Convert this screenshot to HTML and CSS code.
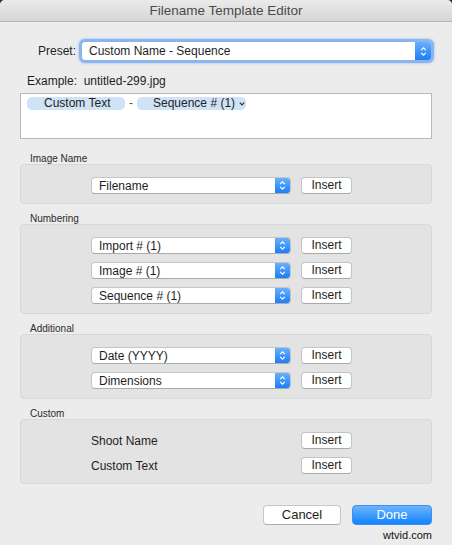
FILE: index.html
```html
<!DOCTYPE html>
<html lang="en">
<head>
<meta charset="utf-8">
<title>Filename Template Editor</title>
<link rel="stylesheet" href="styles.css">
</head>
<body>
<div class="window">
  <div class="titlebar">Filename Template Editor</div>
  <div class="content">
    <div class="preset-row">
      <span class="preset-label">Preset:</span>
      <div class="select select-wide">
        <span class="select-text">Custom Name - Sequence</span>
        <span class="stepper"><svg width="7" height="11" viewBox="0 0 7 11"><path d="M1.2 4.2 L3.5 1.8 L5.8 4.2 M1.2 6.8 L3.5 9.2 L5.8 6.8" fill="none" stroke="#fff" stroke-width="1.2"/></svg></span>
      </div>
    </div>
    <div class="example">Example:&nbsp; untitled-299.jpg</div>
    <div class="token-box">
      <span class="token token-a">Custom Text</span><span class="dash">-</span><span class="token token-b">Sequence # (1)<svg class="caret" width="6" height="4" viewBox="0 0 6 4"><path d="M0.8 0.6 L3 2.9 L5.2 0.6" fill="none" stroke="#333" stroke-width="1.2"/></svg></span>
    </div>

    <section class="group group-first">
      <div class="group-label">Image Name</div>
      <div class="group-box">
        <div class="row">
          <div class="select"><span class="select-text">Filename</span><span class="stepper"><svg width="7" height="11" viewBox="0 0 7 11"><path d="M1.2 4.2 L3.5 1.8 L5.8 4.2 M1.2 6.8 L3.5 9.2 L5.8 6.8" fill="none" stroke="#fff" stroke-width="1.2"/></svg></span></div>
          <button class="btn-insert">Insert</button>
        </div>
      </div>
    </section>

    <section class="group">
      <div class="group-label">Numbering</div>
      <div class="group-box">
        <div class="row">
          <div class="select"><span class="select-text">Import # (1)</span><span class="stepper"><svg width="7" height="11" viewBox="0 0 7 11"><path d="M1.2 4.2 L3.5 1.8 L5.8 4.2 M1.2 6.8 L3.5 9.2 L5.8 6.8" fill="none" stroke="#fff" stroke-width="1.2"/></svg></span></div>
          <button class="btn-insert">Insert</button>
        </div>
        <div class="row">
          <div class="select"><span class="select-text">Image # (1)</span><span class="stepper"><svg width="7" height="11" viewBox="0 0 7 11"><path d="M1.2 4.2 L3.5 1.8 L5.8 4.2 M1.2 6.8 L3.5 9.2 L5.8 6.8" fill="none" stroke="#fff" stroke-width="1.2"/></svg></span></div>
          <button class="btn-insert">Insert</button>
        </div>
        <div class="row">
          <div class="select"><span class="select-text">Sequence # (1)</span><span class="stepper"><svg width="7" height="11" viewBox="0 0 7 11"><path d="M1.2 4.2 L3.5 1.8 L5.8 4.2 M1.2 6.8 L3.5 9.2 L5.8 6.8" fill="none" stroke="#fff" stroke-width="1.2"/></svg></span></div>
          <button class="btn-insert">Insert</button>
        </div>
      </div>
    </section>

    <section class="group">
      <div class="group-label">Additional</div>
      <div class="group-box">
        <div class="row">
          <div class="select"><span class="select-text">Date (YYYY)</span><span class="stepper"><svg width="7" height="11" viewBox="0 0 7 11"><path d="M1.2 4.2 L3.5 1.8 L5.8 4.2 M1.2 6.8 L3.5 9.2 L5.8 6.8" fill="none" stroke="#fff" stroke-width="1.2"/></svg></span></div>
          <button class="btn-insert">Insert</button>
        </div>
        <div class="row">
          <div class="select"><span class="select-text">Dimensions</span><span class="stepper"><svg width="7" height="11" viewBox="0 0 7 11"><path d="M1.2 4.2 L3.5 1.8 L5.8 4.2 M1.2 6.8 L3.5 9.2 L5.8 6.8" fill="none" stroke="#fff" stroke-width="1.2"/></svg></span></div>
          <button class="btn-insert">Insert</button>
        </div>
      </div>
    </section>

    <section class="group">
      <div class="group-label">Custom</div>
      <div class="group-box">
        <div class="row">
          <span class="row-text">Shoot Name</span>
          <button class="btn-insert">Insert</button>
        </div>
        <div class="row">
          <span class="row-text">Custom Text</span>
          <button class="btn-insert">Insert</button>
        </div>
      </div>
    </section>

    <div class="footer">
      <button class="btn btn-cancel">Cancel</button>
      <button class="btn btn-done">Done</button>
    </div>
  </div>
  <div class="watermark">wtvid.com</div>
</div>
</body>
</html>
```

FILE: styles.css
```css
* {
  box-sizing: border-box;
  margin: 0;
  padding: 0;
}

html, body {
  width: 452px;
  height: 545px;
  overflow: hidden;
  background: #2e2e2e;
}

body {
  font-family: "Liberation Sans", Arial, sans-serif;
  font-size: 12px;
  color: #1e1e1e;
}

.window {
  position: relative;
  width: 452px;
  height: 545px;
  background: #ececec;
  border-radius: 5px 5px 0 0;
  overflow: hidden;
}

.titlebar {
  height: 22px;
  border-bottom: 1px solid #b6b6b6;
  background: linear-gradient(#ebebeb, #d6d6d6);
  text-align: center;
  font-size: 13.5px;
  line-height: 21px;
  color: #4a4a4a;
}

.content {
  padding: 0 20px;
}

.preset-row {
  display: flex;
  align-items: center;
  margin-top: 19px;
  height: 20px;
}

.preset-label {
  width: 56px;
  text-align: right;
  margin-right: 5px;
  flex-shrink: 0;
}

.select {
  display: flex;
  align-items: stretch;
  height: 17px;
  background: #fff;
  border: 1px solid #c4c4c4;
  border-bottom-color: #ababab;
  border-radius: 4px;
  overflow: hidden;
}

.select-wide {
  flex: 1;
  height: 20px;
  border-color: #8eb3e8;
  box-shadow: 0 0 0 2px rgba(120, 170, 240, 0.75), 0 0 2px 3px rgba(140, 185, 245, 0.45);
}

.select-text {
  flex: 1;
  padding-left: 7px;
  white-space: nowrap;
  display: flex;
  align-items: center;
}

.stepper {
  width: 15px;
  flex-shrink: 0;
  background: linear-gradient(#68b0fb, #1b7ff8);
  display: flex;
  align-items: center;
  justify-content: center;
}

.select-wide .stepper {
  width: 16px;
}

.example {
  margin-top: 13px;
  line-height: 14px;
  padding-left: 7px;
}

.token-box {
  margin-top: 5px;
  height: 46px;
  background: #fff;
  border: 1px solid #b9b9b9;
  padding: 3px 6px;
  display: flex;
  align-items: flex-start;
}

.token {
  display: inline-flex;
  align-items: center;
  height: 13px;
  line-height: 13px;
  background: #cfe2f6;
  border-radius: 5px;
  color: #222;
  white-space: nowrap;
}

.token-a {
  width: 98px;
  padding-left: 17px;
}

.token-b {
  width: 109px;
  padding-left: 16px;
}

.caret {
  margin-left: 4px;
}

.dash {
  width: 12px;
  text-align: center;
  line-height: 13px;
  color: #555;
}

.group {
  margin-top: 9px;
}

.group-first {
  margin-top: 14px;
}

.group-label {
  font-size: 10px;
  line-height: 11px;
  padding-left: 10px;
  color: #2b2b2b;
}

.group-box {
  background: #e3e3e3;
  border: 1px solid #d8d8d8;
  border-radius: 4px;
  padding: 12px 0 9px 70px;
  display: flex;
  flex-direction: column;
  gap: 8px;
}

.row {
  display: flex;
  align-items: center;
  gap: 10px;
  height: 17px;
}

.row .select {
  width: 200px;
}

.row-text {
  width: 200px;
}

.btn-insert {
  width: 51px;
  height: 17px;
  font-family: inherit;
  font-size: 12px;
  color: #1e1e1e;
  background: #fff;
  border: 1px solid #c3c3c3;
  border-bottom-color: #a9a9a9;
  border-radius: 4px;
  line-height: 15px;
}

.footer {
  margin-top: 21px;
  display: flex;
  justify-content: flex-end;
  gap: 11px;
}

.btn {
  height: 20px;
  font-family: inherit;
  font-size: 13px;
  border-radius: 4px;
  line-height: 18px;
}

.btn-cancel {
  width: 78px;
  background: #fff;
  color: #1e1e1e;
  border: 1px solid #c6c6c6;
  border-bottom-color: #adadad;
}

.btn-done {
  width: 80px;
  background: linear-gradient(#6cb4fc, #1182fd);
  color: #fff;
  border: 1px solid #3e8ff3;
}

.watermark {
  position: absolute;
  top: 529px;
  right: 20px;
  font-size: 11px;
  line-height: 13px;
  color: #111;
}
```
